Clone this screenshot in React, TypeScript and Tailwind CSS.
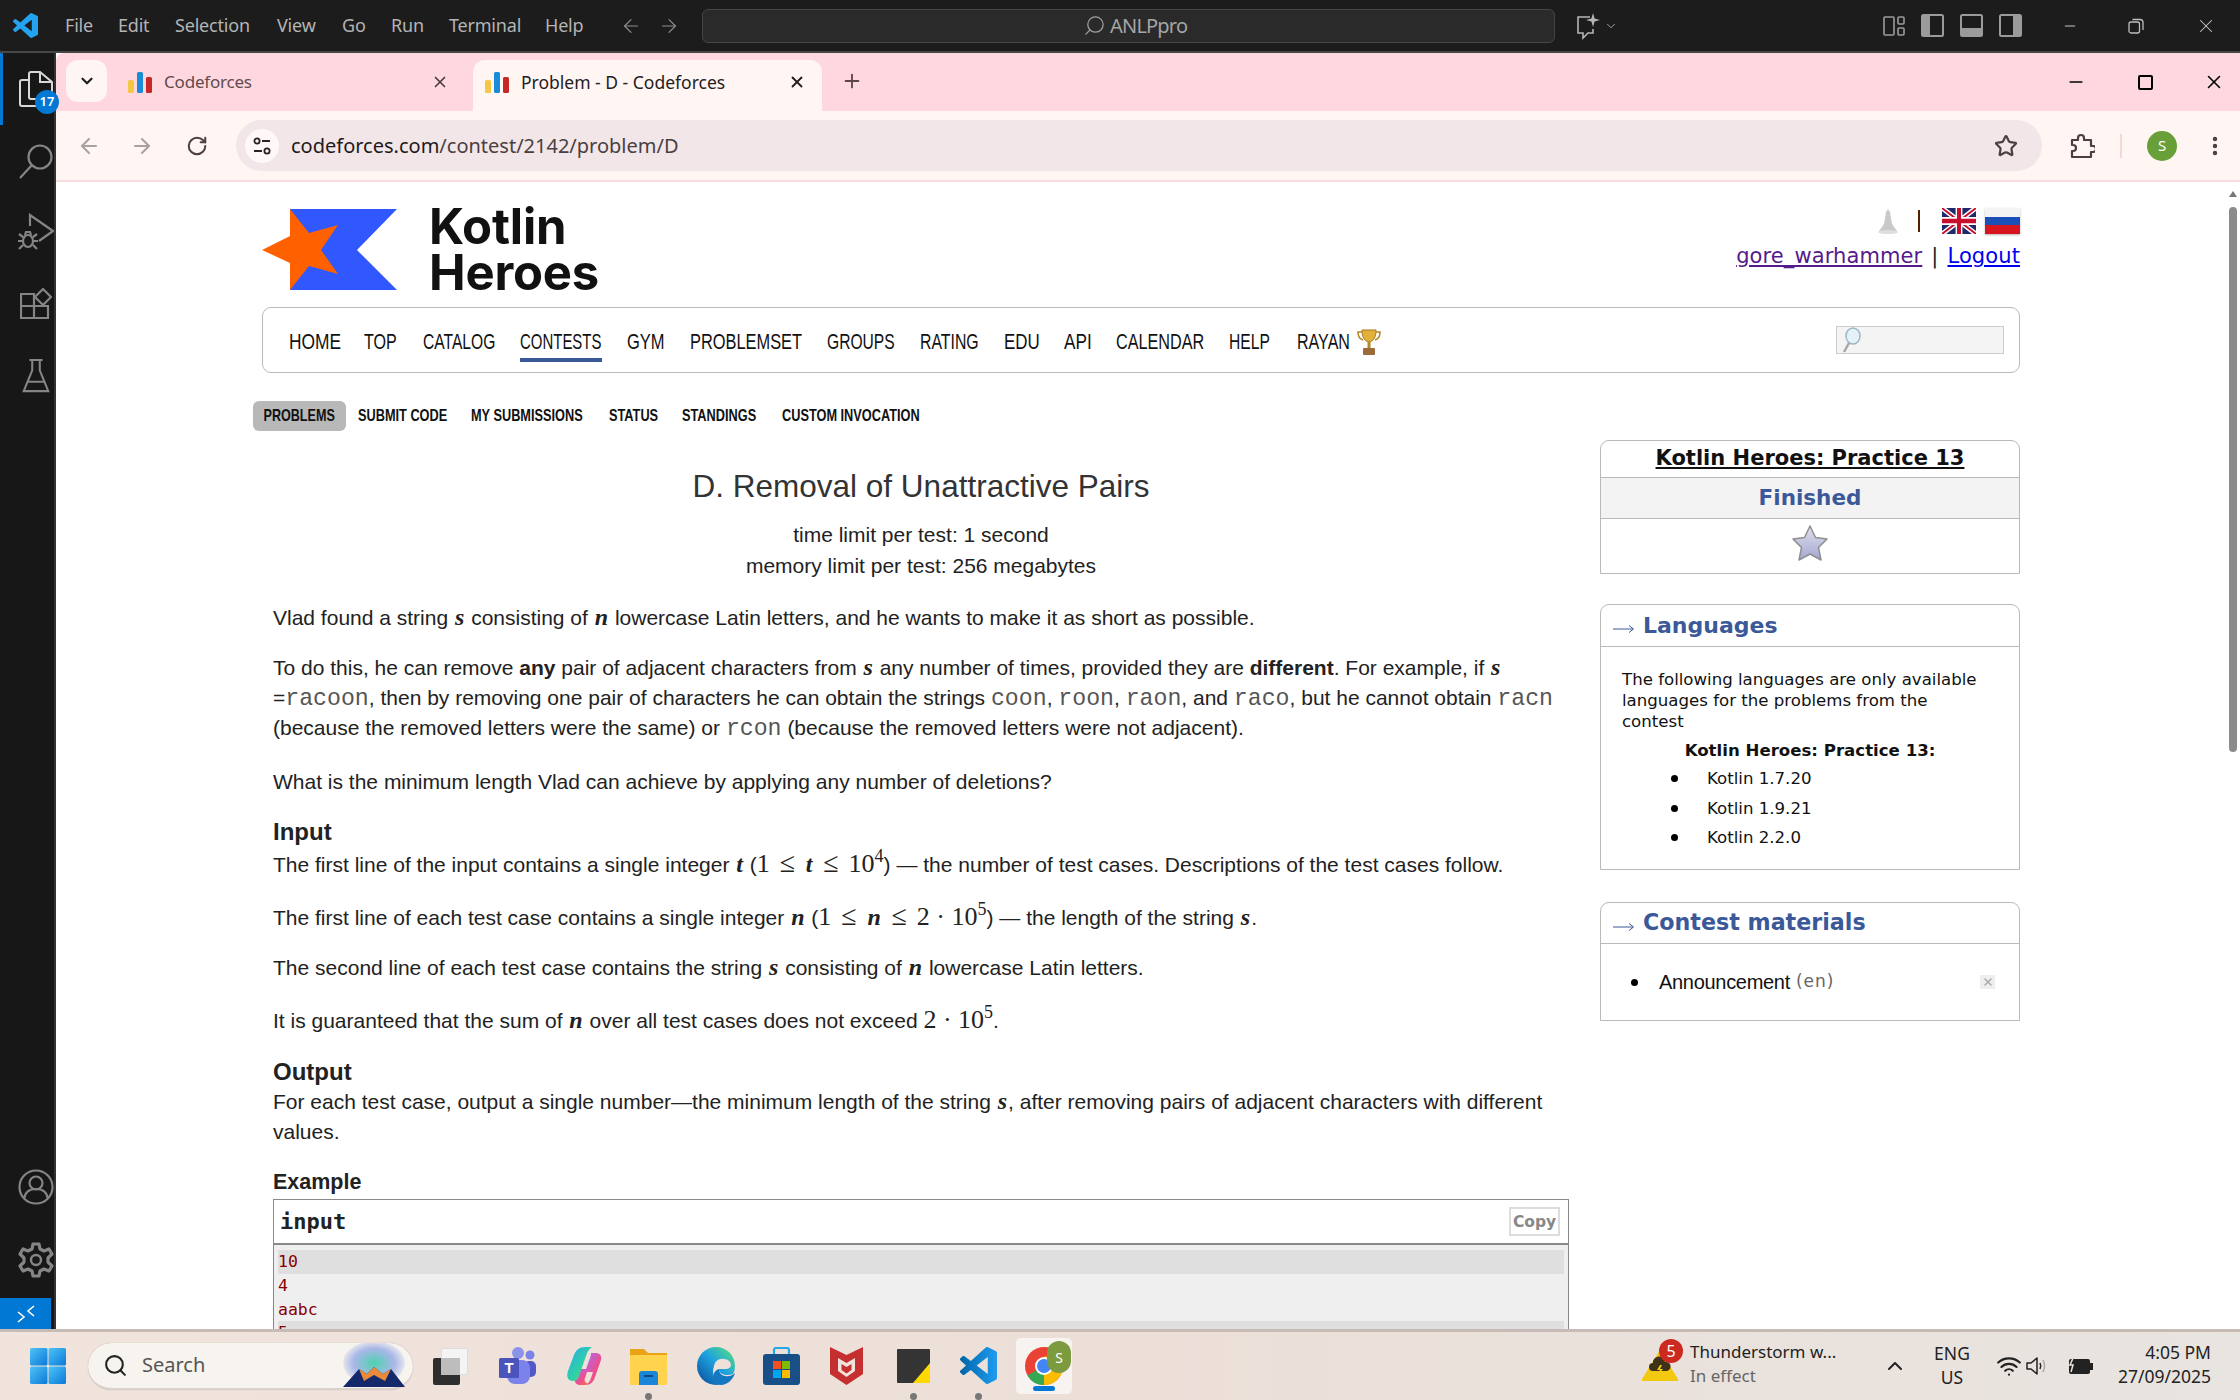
import React from "react";
import { ArrowLeft, ArrowRight, RotateCw, Star, EllipsisVertical, Plus, X, Minus, ChevronDown, ChevronUp, Search, Wifi } from "lucide-react";

const Favicon = ({ className = "" }: { className?: string }) => (
  <svg width="24" height="24" viewBox="0 0 24 24" className={className}>
    <rect x="0" y="10" width="6" height="13" rx="1.5" fill="#f6c744" />
    <rect x="9" y="2" width="6" height="21" rx="1.5" fill="#1a8cd8" />
    <rect x="18" y="7" width="6" height="16" rx="1.5" fill="#c62828" />
  </svg>
);

const VsLogo = ({ size = 24, gradient = false, id = "vs" }: { size?: number; gradient?: boolean; id?: string }) => (
  <svg width={size} height={size} viewBox="0 0 24 24">
    <defs>
      <linearGradient id={id} x1="0" x2="1" y1="0" y2="0">
        <stop offset="0" stopColor="#0065a9" />
        <stop offset="1" stopColor="#1f9cf0" />
      </linearGradient>
    </defs>
    <path
      fill={gradient ? `url(#${id})` : "#23a3ef"}
      d="M23.15 2.587L18.21.21a1.494 1.494 0 0 0-1.705.29l-9.46 8.63-4.12-3.128a.999.999 0 0 0-1.276.057L.327 7.261A1 1 0 0 0 .326 8.74L3.899 12 .326 15.26a1 1 0 0 0 .001 1.479L1.65 17.94a.999.999 0 0 0 1.276.057l4.12-3.128 9.46 8.63a1.492 1.492 0 0 0 1.704.29l4.942-2.377A1.5 1.5 0 0 0 24 20.06V3.939a1.5 1.5 0 0 0-.85-1.352zm-5.146 14.861L10.826 12l7.178-5.448v10.896z"
    />
  </svg>
);

function TitleBar() {
  const items = [
    ["File", "w-[29px]"],
    ["Edit", "w-[33px]"],
    ["Selection", "w-[78px]"],
    ["View", "w-[41px]"],
    ["Go", "w-[25px]"],
    ["Run", "w-[34px]"],
    ["Terminal", "w-[72px]"],
    ["Help", "w-[41px]"],
  ];
  return (
    <div className="h-[53px] shrink-0 bg-[#1c1c1c] flex items-center border-b-2 border-[#474747] font-['Noto_Sans','Open_Sans',sans-serif]">
      <div className="ml-[13px] w-[52px]">
        <VsLogo size={25} id="vs-title" />
      </div>
      <div className="flex gap-[24px] text-[18px] text-[#b4b4b4] tracking-[-0.2px]">
        {items.map(([t, w]) => (
          <span key={t} className={`${w} whitespace-nowrap`}>
            {t}
          </span>
        ))}
      </div>
      <div className="flex gap-[16px] ml-[34px] text-[#8d8d8d]">
        <ArrowLeft size={22} strokeWidth={1.3} />
        <ArrowRight size={22} strokeWidth={1.3} />
      </div>
      <div className="ml-[22px] w-[853px] h-[34px] rounded-[6px] bg-[#2a2a2a] border border-[#454545] flex items-center pl-[380px]">
        <Search size={23} strokeWidth={1.3} className="text-[#a0a0a0] -scale-x-100" />
        <span className="ml-[4px] text-[20px] text-[#a5a5a5] tracking-[-0.8px]">ANLPpro</span>
      </div>
      <div className="ml-[21px] flex items-center text-[#b5b5b5]">
        <svg width="26" height="28" viewBox="0 0 26 28" fill="none" stroke="currentColor" strokeWidth="1.6">
          <path d="M14 5H2v16h5v5l5-5h5v-4" />
          <path d="M17 1l1.6 5.4L24 8l-5.4 1.6L17 15l-1.6-5.4L10 8l5.4-1.6z" fill="currentColor" stroke="none" />
        </svg>
        <ChevronDown size={14} strokeWidth={1.5} className="ml-[2px]" />
      </div>
      <div className="ml-auto flex items-center text-[#9b9b9b]">
        <svg width="22" height="22" viewBox="0 0 22 22" fill="none" stroke="currentColor" strokeWidth="1.6" className="mr-[16px]">
          <rect x="1" y="2" width="10" height="18" rx="1" />
          <rect x="15" y="2" width="6" height="7" rx="1" />
          <rect x="15" y="13" width="6" height="7" rx="1" />
        </svg>
        <svg width="23" height="23" viewBox="0 0 23 23" className="mr-[16px]">
          <rect x="1" y="1" width="21" height="21" rx="1.5" fill="none" stroke="currentColor" strokeWidth="2" />
          <rect x="1" y="1" width="8" height="21" fill="currentColor" />
        </svg>
        <svg width="23" height="23" viewBox="0 0 23 23" className="mr-[16px]">
          <rect x="1" y="1" width="21" height="21" rx="1.5" fill="none" stroke="currentColor" strokeWidth="2" />
          <rect x="1" y="14" width="21" height="8" fill="currentColor" />
        </svg>
        <svg width="23" height="23" viewBox="0 0 23 23" className="mr-[40px]">
          <rect x="1" y="1" width="21" height="21" rx="1.5" fill="none" stroke="currentColor" strokeWidth="2" />
          <rect x="14" y="1" width="8" height="21" fill="currentColor" />
        </svg>
        <Minus size={16} strokeWidth={1.6} className="mr-[50px] text-[#c4c4c4]" />
        <svg width="16" height="16" viewBox="0 0 16 16" fill="none" stroke="#bdbdbd" strokeWidth="1.3" className="mr-[51px]">
          <rect x="1" y="4" width="10.5" height="11" rx="2" />
          <path d="M4.5 1.5H12a3 3 0 0 1 3 3V12" />
        </svg>
        <X size={22} strokeWidth={1.1} className="mr-[23px] text-[#c8c8c8]" />
      </div>
    </div>
  );
}

function ActivityBar() {
  const s = "#858585";
  return (
    <div className="w-[56px] shrink-0 bg-[#171717] border-r-2 border-[#333] flex flex-col relative">
      <div className="h-[72px] flex items-center justify-center relative border-l-[3px] border-[#0078d4]">
        <svg width="34" height="38" viewBox="0 0 34 38" fill="none" stroke="#d8d8d8" strokeWidth="2" className="ml-[14px]">
          <path d="M10 10H3a2 2 0 0 0-2 2v22a2 2 0 0 0 2 2h16a2 2 0 0 0 2-2v-5" />
          <path d="M21 2H12a2 2 0 0 0-2 2v23a2 2 0 0 0 2 2h19a2 2 0 0 0 2-2V12z" />
          <path d="M21 2v10h12" />
        </svg>
        <span className="absolute left-[32px] top-[37px] w-[24px] h-[24px] rounded-full bg-[#0078d4] text-white text-[13px] font-semibold flex items-center justify-center font-['Noto_Sans',sans-serif] z-10">
          17
        </span>
      </div>
      <div className="flex flex-col items-center pt-[18px] pl-[18px]">
        <svg width="36" height="36" viewBox="0 0 36 36" fill="none" stroke={s} strokeWidth="2.2">
          <circle cx="22" cy="14" r="11.5" />
          <path d="M14 22L2 35" />
        </svg>
        <svg width="36" height="38" viewBox="0 0 36 38" fill="none" stroke={s} strokeWidth="2.2" className="mt-[34px]">
          <path d="M12 13V2l23 16-14 10" />
          <ellipse cx="10" cy="28" rx="5" ry="6" />
          <path d="M1 21l4 3M19 21l-4 3M0 28h5M15 28h5M1 36l4-4M19 36l-4-4M7 22l1-3h4l1 3" />
        </svg>
        <svg width="32" height="32" viewBox="0 0 32 32" fill="none" stroke={s} strokeWidth="2.2" className="mt-[37px]">
          <path d="M1 6h13v24H1zM1 18h27v12H14" />
          <path d="M23 1l8 8-8 8-8-8z" />
        </svg>
        <svg width="28" height="34" viewBox="0 0 28 36" fill="none" stroke={s} strokeWidth="2.2" className="mt-[39px]">
          <path d="M7 1h14M10 1v11L1 34h26l-9-22V1M6 24h16" />
        </svg>
      </div>
      <div className="mt-auto flex flex-col items-center">
        <svg width="36" height="36" viewBox="0 0 36 36" fill="none" stroke={s} strokeWidth="2.2" className="ml-[18px]">
          <circle cx="18" cy="18" r="16.5" />
          <circle cx="18" cy="14" r="6.5" />
          <path d="M6 30c1-7 6-10 12-10s11 3 12 10" />
        </svg>
        <svg width="36" height="36" viewBox="0 0 36 36" fill="none" stroke={s} strokeWidth="3.2" className="mt-[37px] ml-[18px]">
          <circle cx="18" cy="18" r="5" strokeWidth="2.4" />
          <path d="M15 2h6l1 5 4 2 5-2 3 5-4 4v4l4 4-3 5-5-2-4 2-1 5h-6l-1-5-4-2-5 2-3-5 4-4v-4L2 12l3-5 5 2 4-2z" strokeLinejoin="round" />
        </svg>
        <div className="mt-[20px] w-full h-[31px] pr-[3px]">
          <div className="h-full bg-[#0078d4] flex items-center justify-center">
            <svg width="20" height="18" viewBox="0 0 20 18" fill="none" stroke="#fff" strokeWidth="1.6">
              <path d="M2 7l6 5-6 5M18 1l-6 5 6 5" />
            </svg>
          </div>
        </div>
      </div>
    </div>
  );
}

function ChromeBars() {
  return (
    <>
      <div className="h-[58px] shrink-0 bg-[#ffd8df] flex font-['Noto_Sans',sans-serif]">
        <div className="ml-[10px] mt-[7px] w-[41px] h-[42px] rounded-[12px] bg-[#fff5f3] flex items-center justify-center">
          <ChevronDown size={18} strokeWidth={3} className="text-[#222]" />
        </div>
        <div className="w-[366px] flex items-center pl-[21px] text-[#5f4a4e]">
          <Favicon />
          <span className="ml-[12px] text-[17px] tracking-[-0.2px]">Codeforces</span>
          <X size={18} strokeWidth={2.2} className="ml-auto mr-[24px] text-[#4d3a3e]" />
        </div>
        <div className="mt-[7px] w-[349px] h-[51px] bg-[#fff5f3] rounded-t-[12px] flex items-center pl-[12px] pb-[7px] text-[#241c1d]">
          <Favicon />
          <span className="ml-[12px] text-[17.500px]">Problem - D - Codeforces</span>
          <X size={18} strokeWidth={2.4} className="ml-auto mr-[16px]" />
        </div>
        <div className="ml-[19px] flex items-center pb-[2px]">
          <Plus size={22} strokeWidth={2} className="text-[#5a4549]" />
        </div>
        <div className="ml-auto flex items-center text-black pr-[15px]">
          <Minus size={20} strokeWidth={2} className="mr-[52px]" />
          <div className="w-[15px] h-[15px] border-2 border-black rounded-[2px] mr-[50px]" />
          <X size={22} strokeWidth={1.7} />
        </div>
      </div>
      <div className="h-[71px] shrink-0 bg-[#fff5f3] border-b-2 border-[#f9dce0] flex items-center">
        <ArrowLeft size={24} strokeWidth={2} className="ml-[21px] text-[#a8a1a2]" />
        <ArrowRight size={24} strokeWidth={2} className="ml-[29px] text-[#a8a1a2]" />
        <RotateCw size={22} strokeWidth={2.2} className="ml-[32px] text-[#4f3e41]" />
        <div className="ml-[28px] w-[1806px] h-[51px] rounded-full bg-[#f2e6e9] flex items-center pl-[9px]">
          <div className="w-[34px] h-[34px] rounded-full bg-[#fff8f7] flex items-center justify-center">
            <svg width="20" height="20" viewBox="0 0 20 20" fill="none" stroke="#2b2226" strokeWidth="1.8">
              <circle cx="5" cy="5" r="2.6" />
              <path d="M10 5h8M2 15h8" />
              <circle cx="15" cy="15" r="2.6" />
            </svg>
          </div>
          <span className="ml-[12px] text-[20px] text-[#1f1a1b] font-['Noto_Sans',sans-serif]">
            codeforces.com<span className="text-[#4a3f42]">/contest/2142/problem/D</span>
          </span>
          <Star size={24} strokeWidth={2.2} className="ml-auto mr-[24px] text-[#4f3e41]" />
        </div>
        <svg width="26" height="26" viewBox="0 0 26 26" fill="none" stroke="#4f3e41" strokeWidth="2.2" className="ml-[27px]">
          <path d="M3 7h6V5a3 3 0 0 1 6 0v2h7v6h2a3 3 0 0 1 0 6h-2v5H3v-6h1a3 3 0 0 0 0-6H3z" strokeLinejoin="round" />
        </svg>
        <div className="ml-[25px] w-[2px] h-[24px] bg-[#f9d5da]" />
        <div className="ml-[25px] w-[30px] h-[30px] rounded-full bg-[#689f38] text-white text-[15px] flex items-center justify-center font-['Noto_Sans',sans-serif]">
          S
        </div>
        <EllipsisVertical size={24} strokeWidth={2.4} className="ml-[26px] text-[#4f3e41]" />
      </div>
    </>
  );
}

const V = ({ children }: { children: React.ReactNode }) => (
  <span className="font-['Liberation_Serif',serif] italic font-bold text-[24px] leading-none text-[#222] mx-[1px]">{children}</span>
);
const N = ({ children }: { children: React.ReactNode }) => (
  <span className="font-['Liberation_Serif',serif] text-[26px] leading-none text-[#222]">{children}</span>
);
const Le = () => <span className="font-['Liberation_Serif',serif] text-[28px] leading-none text-[#222] mx-[4px]">≤</span>;
const Sup = ({ children }: { children: React.ReactNode }) => (
  <sup className="font-['Liberation_Serif',serif] text-[18px] text-[#222] -top-[10px]">{children}</sup>
);
const Tt = ({ children }: { children: React.ReactNode }) => (
  <span className="font-['Liberation_Mono',monospace] text-[23.200px] leading-none text-[#555]">{children}</span>
);

function Header() {
  const nav = [
    ["HOME", "w-[50px]", "scale-x-[.79]"],
    ["TOP", "w-[34px]", "scale-x-[.73]"],
    ["CATALOG", "w-[72px]", "scale-x-[.71]"],
    ["CONTESTS", "w-[82px]", "scale-x-[.68]"],
    ["GYM", "w-[38px]", "scale-x-[.75]"],
    ["PROBLEMSET", "w-[112px]", "scale-x-[.745]"],
    ["GROUPS", "w-[68px]", "scale-x-[.71]"],
    ["RATING", "w-[59px]", "scale-x-[.72]"],
    ["EDU", "w-[35px]", "scale-x-[.77]"],
    ["API", "w-[27px]", "scale-x-[.78]"],
    ["CALENDAR", "w-[88px]", "scale-x-[.737]"],
    ["HELP", "w-[43px]", "scale-x-[.71]"],
    ["RAYAN", "w-[53px]", "scale-x-[.73]"],
  ];
  const sub = [
    ["SUBMIT CODE", "w-[89px]"],
    ["MY SUBMISSIONS", "w-[114px]"],
    ["STATUS", "w-[49px]"],
    ["STANDINGS", "w-[76px]"],
    ["CUSTOM INVOCATION", "w-[140px]"],
  ];
  const cond = "font-['Liberation_Sans',sans-serif]";
  return (
    <>
      <div className="flex items-start h-[98px]">
        <svg width="135" height="81" viewBox="0 0 135 81" className="shrink-0">
          <polygon points="28,0 135,0 95,41 135,81 28,81" fill="#3157ff" />
          <polygon points="0,41 28,27 28,0 47,24 76,16 59,41 76,65 47,57 28,81 28,54" fill="#ff6000" />
        </svg>
        <div className="ml-[32px] -mt-[5px] font-['Inter',sans-serif] font-bold text-[49px] leading-[46px] text-[#111] tracking-[-0.2px]">
          Kotlin
          <br />
          Heroes
        </div>
        <div className="ml-auto flex flex-col items-end -mt-[2px]">
          <div className="flex items-center h-[28px]">
            <svg width="22" height="25" viewBox="0 0 22 25">
              <path d="M11 0l2 3 2 12 5 7H2l5-7 2-12z" fill="#c9c9c9" />
              <ellipse cx="11" cy="23" rx="10" ry="2" fill="#dedede" />
            </svg>
            <div className="ml-[19px] w-[2px] h-[22px] bg-[#5a1f00]" />
            <svg width="34" height="26" viewBox="0 0 60 40" className="ml-[22px]" preserveAspectRatio="none">
              <rect width="60" height="40" fill="#1f2a6b" />
              <path d="M0 0L60 40M60 0L0 40" stroke="#fff" strokeWidth="8" />
              <path d="M0 0L60 40M60 0L0 40" stroke="#c8102e" strokeWidth="3" />
              <path d="M30 0V40M0 20H60" stroke="#fff" strokeWidth="12" />
              <path d="M30 0V40M0 20H60" stroke="#c8102e" strokeWidth="7" />
            </svg>
            <div className="ml-[9px] w-[35px] h-[26px] flex flex-col shadow-[0_1px_2px_rgba(0,0,0,0.3)]">
              <div className="flex-1 bg-[#f4f4f4]" />
              <div className="flex-1 bg-[#1b4fb8]" />
              <div className="flex-1 bg-[#d8141f]" />
            </div>
          </div>
          <div className="mt-[8px] text-[21px] font-['DejaVu_Sans',sans-serif] leading-[26px] text-[#222] whitespace-nowrap tracking-[0.1px]">
            <span className="underline text-[#551a8b]">gore_warhammer</span>
            <span className="mx-[9px]">|</span>
            <span className="underline text-[#0000ee]">Logout</span>
          </div>
        </div>
      </div>
      <div className="h-[66px] border border-[#b9b9b9] rounded-[9px] flex items-center relative">
        <div className={`pl-[26px] flex items-center gap-[25px] text-[22px] text-[#111] ${cond} h-full`}>
          {nav.map(([n, w, sc]) => (
            <div key={n} className={`${w} shrink-0 relative h-full flex items-center pt-[3px] ${n === "CONTESTS" ? "after:absolute after:left-0 after:right-0 after:top-[50px] after:h-[4px] after:bg-[#3b5998]" : ""}`}>
              <span className={`inline-block origin-left whitespace-nowrap ${sc}`}>{n}</span>
            </div>
          ))}
        </div>
        <svg width="24" height="30" viewBox="0 0 24 30" fill="none" className="ml-[7px] mt-[4px]">
          <path d="M5 3h14c0 7-2 11-7 12C7 14 5 10 5 3z" fill="#e2b13c" stroke="#a9781c" />
          <path d="M5 5H1c0 5 2 7 5 8M19 5h4c0 5-2 7-5 8" stroke="#b48822" strokeWidth="1.6" />
          <rect x="10.5" y="15" width="3" height="6" fill="#b48822" />
          <rect x="6" y="21" width="12" height="7" rx="1" fill="#9c6b3a" />
        </svg>
        <div className="ml-auto mr-[15px] w-[168px] h-[28px] bg-[#f4f4f4] border border-[#ccc] flex items-center">
          <svg width="22" height="26" viewBox="0 0 22 26" fill="none" className="ml-[3px]">
            <ellipse cx="13" cy="9" rx="7" ry="8" fill="#e4f1f7" stroke="#9db7c4" strokeWidth="1.5" />
            <path d="M9 16L4 25" stroke="#a8a8a8" strokeWidth="2.5" />
          </svg>
        </div>
      </div>
      <div className={`flex items-center mt-[28px] -ml-[9px] h-[30px] text-[17px] font-bold text-[#111] ${cond}`}>
        <div className="w-[93px] h-full rounded-[6px] bg-[#b8b8b8] flex items-center justify-center">
          <span className="inline-block whitespace-nowrap scale-x-[.74]">PROBLEMS</span>
        </div>
        <div className="flex gap-[24px] ml-[12px]">
          {sub.map(([t, w]) => (
            <span key={t} className={`${w} shrink-0`}>
              <span className="inline-block origin-left whitespace-nowrap scale-x-[.75]">{t}</span>
            </span>
          ))}
        </div>
      </div>
    </>
  );
}

function Problem() {
  const sans = "font-['Liberation_Sans',Arial,sans-serif]";
  return (
    <div className={`w-[1296px] ml-[11px] pt-[36px] shrink-0 text-[#222] text-[21px] leading-[30px] ${sans}`}>
      <div className="text-center text-[31.500px] leading-[38px] text-[#333]">D. Removal of Unattractive Pairs</div>
      <div className="text-center mt-[15px]">time limit per test: 1 second</div>
      <div className="text-center mt-[1px]">memory limit per test: 256 megabytes</div>
      <p className="mt-[22px]">
        Vlad found a string <V>s</V> consisting of <V>n</V> lowercase Latin letters, and he wants to make it as short as possible.
      </p>
      <p className="mt-[20px]">
        To do this, he can remove <b>any</b> pair of adjacent characters from <V>s</V> any number of times, provided they are <b>different</b>. For example, if <V>s</V> =<Tt>racoon</Tt>, then by removing one pair of characters he can obtain the strings <Tt>coon</Tt>, <Tt>roon</Tt>, <Tt>raon</Tt>, and <Tt>raco</Tt>, but he cannot obtain <Tt>racn</Tt> (because the removed letters were the same) or <Tt>rcon</Tt> (because the removed letters were not adjacent).
      </p>
      <p className="mt-[24px]">What is the minimum length Vlad can achieve by applying any number of deletions?</p>
      <div className="mt-[20px] font-bold text-[24px] leading-[30px]">Input</div>
      <p className="mt-[2px]">
        The first line of the input contains a single integer <V>t</V> (<N>1</N> <Le /> <V>t</V> <Le /> <N>10</N>
        <Sup>4</Sup>) — the number of test cases. Descriptions of the test cases follow.
      </p>
      <p className="mt-[22px]">
        The first line of each test case contains a single integer <V>n</V> (<N>1</N> <Le /> <V>n</V> <Le /> <N>2 · 10</N>
        <Sup>5</Sup>) — the length of the string <V>s</V>.
      </p>
      <p className="mt-[20px]">
        The second line of each test case contains the string <V>s</V> consisting of <V>n</V> lowercase Latin letters.
      </p>
      <p className="mt-[23px]">
        It is guaranteed that the sum of <V>n</V> over all test cases does not exceed <N>2 · 10</N>
        <Sup>5</Sup>.
      </p>
      <div className="mt-[21px] font-bold text-[24px] leading-[30px]">Output</div>
      <p className="mt-[0px]">
        For each test case, output a single number—the minimum length of the string <V>s</V>, after removing pairs of adjacent characters with different values.
      </p>
      <div className="mt-[20px] font-bold leading-[30px] text-[21.5px]">Example</div>
      <div className="mt-[2px] border border-[#888]">
        <div className="h-[45px] flex items-center border-b-2 border-[#888] pl-[6px] pr-[8px]">
          <span className="font-['DejaVu_Sans_Mono',monospace] font-bold text-[22px] text-[#222]">input</span>
          <span className="ml-auto w-[51px] h-[29px] border-2 border-[#ddd] flex items-center justify-center text-[15.500px] font-bold text-[#888] font-['DejaVu_Sans',sans-serif]">Copy</span>
        </div>
        <div className="bg-[#efefef] px-[4px] pt-[5px] h-[200px] font-['DejaVu_Sans_Mono',monospace] text-[16.5px] leading-[23.5px] text-[#800]">
          <div className="bg-[#dfdfdf] h-[24px]">10</div>
          <div>4</div>
          <div>aabc</div>
          <div className="bg-[#dfdfdf]">5</div>
        </div>
      </div>
    </div>
  );
}

const Arrow = () => (
  <svg width="21" height="10" viewBox="0 0 21 10" fill="none" stroke="#3b5998" strokeWidth="1" className="mr-[9px] mt-[7px] shrink-0">
    <path d="M0 5h20M16 1.500L20.500 5 16 8.500" />
  </svg>
);

function Sidebar() {
  const dv = "font-['DejaVu_Sans',sans-serif]";
  const head = `flex items-center border-b border-[#b9b9b9] pl-[12px] font-bold text-[#3b5998] ${dv}`;
  const langs = ["Kotlin 1.7.20", "Kotlin 1.9.21", "Kotlin 2.2.0"];
  return (
    <div className="w-[420px] ml-auto flex flex-col text-[#111]">
      <div className={`mt-[9px] h-[134px] border border-[#b9b9b9] rounded-t-[9px] ${dv} flex flex-col`}>
        <div className="h-[37px] flex items-center justify-center border-b border-[#b9b9b9] font-bold text-[21px] underline">Kotlin Heroes: Practice 13</div>
        <div className="h-[41px] flex items-center justify-center border-b border-[#b9b9b9] bg-[#f3f3f3] font-bold text-[21.5px] text-[#3b5998]">Finished</div>
        <div className="flex-1 flex items-center justify-center pb-[7px]">
          <svg width="38" height="38" viewBox="0 0 38 38">
            <defs>
              <linearGradient id="st" x1="0" x2="0" y1="0" y2="1">
                <stop offset="0" stopColor="#dfe0ea" />
                <stop offset="1" stopColor="#a5a6d4" />
              </linearGradient>
            </defs>
            <path d="M19 2l5.5 11.5L36 15l-8.5 8.500L30 36l-11-6-11 6 2.5-12.500L2 15l11.500-1.500z" fill="url(#st)" stroke="#8e8e8e" strokeWidth="1.5" strokeLinejoin="round" />
          </svg>
        </div>
      </div>
      <div className="mt-[30px] h-[266px] border border-[#b9b9b9] rounded-t-[9px]">
        <div className={`h-[42px] text-[22px] ${head}`}>
          <Arrow />
          Languages
        </div>
        <div className={`pl-[21px] pr-[30px] pt-[22px] text-[16.6px] leading-[21px] ${dv}`}>
          <div>The following languages are only available languages for the problems from the contest</div>
          <div className="text-center font-bold mt-[8px] -mr-[9px]">Kotlin Heroes: Practice 13:</div>
          <div className="mt-[3px] pl-[49px] flex flex-col">
            {langs.map((l) => (
              <div key={l} className="h-[29.500px] flex items-center">
                <span className="w-[7px] h-[7px] rounded-full bg-black shrink-0" />
                <span className="ml-[29px]">{l}</span>
              </div>
            ))}
          </div>
        </div>
      </div>
      <div className="mt-[32px] h-[119px] border border-[#b9b9b9] rounded-t-[9px]">
        <div className={`h-[41px] text-[22.200px] ${head}`}>
          <Arrow />
          Contest materials
        </div>
        <div className="flex items-center pl-[30px] pr-[24px] h-[76px]">
          <span className="w-[7px] h-[7px] rounded-full bg-black" />
          <span className="ml-[21px] text-[20px] font-['Liberation_Sans',sans-serif] tracking-[-0.3px]">Announcement</span>
          <span className={`ml-[6px] text-[17px] text-[#666] ${dv} tracking-[1px]`}>(en)</span>
          <span className="ml-auto w-[15px] h-[14px] bg-[#eee] flex items-center justify-center">
            <X size={12} strokeWidth={3} className="text-[#aaa]" />
          </span>
        </div>
      </div>
    </div>
  );
}

const TaskIcons = () => (
  <div className="flex items-center">
    {/* task view */}
    <div className="ml-[20px] w-[37px] h-[37px] relative">
      <div className="absolute left-[8px] top-0 w-[27px] h-[27px] bg-[#f4f4f4] rounded-[2px] border border-[#ddd]" />
      <div className="absolute left-0 top-[10px] w-[27px] h-[27px] bg-[#2e2e2e] rounded-[2px]" />
      <div className="absolute left-[8px] top-[10px] w-[19px] h-[17px] bg-[#bdbdbd]" />
    </div>
    {/* teams */}
    <svg width="37" height="38" viewBox="0 0 37 38" className="ml-[29px]">
      <circle cx="31" cy="8" r="4.5" fill="#7b83eb" />
      <rect x="25" y="14" width="12" height="16" rx="5" fill="#5059c9" />
      <circle cx="19" cy="6" r="6" fill="#8b93e8" />
      <rect x="8" y="13" width="23" height="24" rx="8" fill="#7b83eb" />
      <rect x="0" y="11" width="20" height="20" rx="1.5" fill="#4b53bc" />
      <text x="10" y="26" textAnchor="middle" fontSize="15" fontWeight="700" fill="#fff" fontFamily="Liberation Sans">T</text>
    </svg>
    {/* copilot */}
    <svg width="38" height="38" viewBox="0 0 38 38" className="ml-[29px]">
      <defs>
        <linearGradient id="cp1" x1="0" x2="1" y1="0" y2="1">
          <stop offset="0" stopColor="#2aa6f0" />
          <stop offset="0.6" stopColor="#2fd4a0" />
          <stop offset="1" stopColor="#f6c52b" />
        </linearGradient>
        <linearGradient id="cp2" x1="0" x2="1" y1="0" y2="1">
          <stop offset="0" stopColor="#a371f7" />
          <stop offset="0.6" stopColor="#ee4d8e" />
          <stop offset="1" stopColor="#f6752b" />
        </linearGradient>
      </defs>
      <path d="M21 38h-6c-4 0-6-3-5-7l3-9h10l-3 9c-1 3 0 5 3 5z" fill="url(#cp2)" />
      <path d="M23 0h-3c-6 0-9 3-11 8L3 24c-2 6 0 10 5 10 3 0 5-2 6-5l7-20c1-4 3-7 6-9z" fill="url(#cp1)" />
      <path d="M26 6h5c4 0 6 3 5 7l-6 17c-1 4-4 8-9 8 2-1 4-4 5-7l2-6-8 0 6-17z" fill="url(#cp2)" />
    </svg>
    {/* explorer */}
    <div className="relative ml-[27px] w-[37px] h-[38px]">
      <svg width="37" height="38" viewBox="0 0 37 38">
        <path d="M0 2h14l4 4h19v6H0z" fill="#e8a317" />
        <rect x="0" y="8" width="37" height="30" rx="1" fill="#ffd34e" />
        <path d="M9 38V27a3 3 0 0 1 3-3h13a3 3 0 0 1 3 3v11z" fill="#1a86d9" />
        <rect x="14" y="28" width="9" height="2" fill="#0c4a86" />
      </svg>
      <div className="absolute left-[15px] top-[46px] w-[7px] h-[7px] rounded-full bg-[#777]" />
    </div>
    {/* edge */}
    <svg width="38" height="38" viewBox="0 0 38 38" className="ml-[30px]">
      <defs>
        <linearGradient id="ed" x1="0.9" x2="0.1" y1="0.1" y2="0.9">
          <stop offset="0" stopColor="#4dd68a" />
          <stop offset="0.45" stopColor="#1fa3e0" />
          <stop offset="1" stopColor="#0c59a4" />
        </linearGradient>
      </defs>
      <circle cx="19" cy="19" r="19" fill="url(#ed)" />
      <path d="M17 19c1-5 5-8 10-7 4 0 7 3 7 6 0 2-2 4-6 4h-6c0 4 4 6 9 6 3 0 5-1 7-2l-2 6c-3 3-6 4-9 4-9 0-13-8-10-17z" fill="#eee1da" />
      <path d="M22 22c0 5 4 8 10 7 2 0 4-1 6-3-2 7-8 12-14 12-5 0-8-3-8-8 0-3 2-7 6-8z" fill="#1377c2" />
    </svg>
    {/* store */}
    <svg width="37" height="38" viewBox="0 0 37 38" className="ml-[28px]">
      <path d="M11 8V3a2 2 0 0 1 2-2h11a2 2 0 0 1 2 2v5" fill="none" stroke="#25a8e8" strokeWidth="2.200" />
      <rect x="0" y="7" width="37" height="31" rx="3" fill="#174f86" />
      <rect x="10" y="14" width="8" height="8" fill="#f25022" />
      <rect x="19" y="14" width="8" height="8" fill="#7fba00" />
      <rect x="10" y="23" width="8" height="8" fill="#00a4ef" />
      <rect x="19" y="23" width="8" height="8" fill="#ffb900" />
    </svg>
    {/* mcafee */}
    <svg width="33" height="38" viewBox="0 0 33 38" className="ml-[30px]">
      <path d="M0 0l16.500 8L33 0v27L16.500 38 0 27z" fill="#c62f2f" />
      <path d="M8 11l8.500 5 8.500-5v13l-8.500 6L8 24z" fill="#efe3dc" />
      <path d="M11.500 17l5 3 5-3v6l-5 3.500-5-3.500z" fill="#c62f2f" />
    </svg>
    {/* sticky */}
    <div className="relative ml-[34px] w-[33px] h-[38px]">
      <svg width="33" height="38" viewBox="0 0 33 38">
        <rect y="2" width="33" height="34" rx="1" fill="#343434" />
        <path d="M16 36l17-20v20z" fill="#ffd800" />
      </svg>
      <div className="absolute left-[13px] top-[46px] w-[7px] h-[7px] rounded-full bg-[#777]" />
    </div>
    {/* vscode */}
    <div className="relative ml-[30px] w-[37px] h-[38px]">
      <VsLogo size={37} gradient id="vs-task" />
      <div className="absolute left-[15px] top-[46px] w-[7px] h-[7px] rounded-full bg-[#777]" />
    </div>
    {/* chrome */}
    <div className="relative ml-[19px] w-[56px] h-[56px] rounded-[5px] bg-[#f7f3f0] flex items-center justify-center">
      <svg width="38" height="38" viewBox="0 0 38 38">
        <circle cx="19" cy="19" r="19" fill="#ea4335" />
        <path d="M19 19L2.500 28.500A19 19 0 0 0 19 38z" fill="#34a853" />
        <path d="M19 19v19A19 19 0 0 0 35.500 9.500L19 9.500z" fill="#fbbc04" />
        <circle cx="19" cy="19" r="9" fill="#fff" />
        <circle cx="19" cy="19" r="7" fill="#4285f4" />
      </svg>
      <div className="absolute right-[1px] top-[3px] w-[24px] h-[32px] rounded-full bg-[#7c9a3e] text-white text-[14px] flex items-center justify-center font-['Noto_Sans',sans-serif]">S</div>
      <div className="absolute left-[17px] bottom-[3px] w-[22px] h-[5px] rounded-full bg-[#0078d4]" />
    </div>
  </div>
);

function Taskbar() {
  const f = "font-['Noto_Sans','Open_Sans',sans-serif]";
  return (
    <div className={`h-[71px] shrink-0 border-t-[3px] border-[#c6bcb5] bg-gradient-to-r from-[#f0e4dc] via-[#ecdfd8] to-[#e8e4e0] flex items-center ${f}`}>
      <svg width="36" height="36" viewBox="0 0 36 36" className="ml-[30px]">
        <defs>
          <linearGradient id="win" x1="0" x2="1" y1="0" y2="1">
            <stop offset="0" stopColor="#4fc4f7" />
            <stop offset="1" stopColor="#0a78d8" />
          </linearGradient>
        </defs>
        <rect x="0" y="0" width="17.500" height="17.500" rx="1.500" fill="url(#win)" />
        <rect x="18.500" y="0" width="17.500" height="17.500" rx="1.500" fill="url(#win)" />
        <rect x="0" y="18.500" width="17.500" height="17.500" rx="1.500" fill="url(#win)" />
        <rect x="18.500" y="18.500" width="17.500" height="17.500" rx="1.500" fill="url(#win)" />
      </svg>
      <div className="ml-[22px] w-[325px] h-[47px] rounded-full bg-[#f7f3ef] border-b-2 border-[#d9d2cc] shadow-[0_0_1px_rgba(0,0,0,0.3)] flex items-center pl-[15px] pr-[8px]">
        <Search size={25} strokeWidth={2} className="text-[#222]" />
        <span className="ml-[14px] text-[20px] text-[#555]">Search</span>
        <svg width="62" height="44" viewBox="0 0 62 44" className="ml-auto">
          <defs>
            <radialGradient id="sk" cx="0.5" cy="0.5" r="0.55">
              <stop offset="0" stopColor="#4ed2b0" />
              <stop offset="0.6" stopColor="#a9b7e8" />
              <stop offset="1" stopColor="#f7f3ef" />
            </radialGradient>
          </defs>
          <ellipse cx="31" cy="20" rx="31" ry="22" fill="url(#sk)" />
          <path d="M0 44l16-18 8 5 7-7 9 7 8-5 14 18z" fill="#13296b" />
          <path d="M16 26l8 5 7-7 9 7 8-5-6 12-11-6-10 6z" fill="#e98b3a" />
        </svg>
      </div>
      <TaskIcons />
      <div className="relative ml-auto w-[36px] h-[32px] mr-[12px] -mt-[3px]">
        <svg width="36" height="32" viewBox="0 0 36 32">
          <path d="M18 1L36 30a1 1 0 0 1-1 2H1a1 1 0 0 1-1-2z" fill="#f2c811" />
          <path d="M11 22a4 4 0 0 1 0-8 6 6 0 0 1 12-1 4.500 4.500 0 0 1 2 9z" fill="#3e3318" />
          <path d="M18 16l-3 5h3l-2 5 5-6h-3l2-4z" fill="#f2c811" />
        </svg>
        <span className="absolute left-[17px] -top-[10px] w-[24px] h-[24px] rounded-full bg-[#cc2a20] text-white text-[16px] flex items-center justify-center">5</span>
      </div>
      <div className="w-[160px] text-[17px] leading-[24px] text-[#222] whitespace-nowrap -mt-[4px]">
        <div>Thunderstorm w...</div>
        <div className="text-[#666]">In effect</div>
      </div>
      <ChevronUp size={24} strokeWidth={2} className="ml-[33px] text-[#222]" />
      <div className="ml-[23px] w-[44px] text-center text-[17.5px] leading-[24px] text-[#222] -mt-[3px]">
        ENG
        <br />
        US
      </div>
      <Wifi size={26} strokeWidth={2} className="ml-[22px] text-[#222]" />
      <svg width="24" height="24" viewBox="0 0 24 24" fill="none" stroke="#222" strokeWidth="1.5" className="ml-[3px]">
        <path d="M2 9v6h4l6 5V4L6 9z" strokeLinejoin="round" />
        <path d="M15 9c1 2 1 4 0 6" />
        <path d="M18 6c2 4 2 8 0 12" stroke="#aaa" />
      </svg>
      <svg width="26" height="20" viewBox="0 0 26 20" className="ml-[19px]">
        <rect x="1" y="3" width="21" height="15" rx="2" fill="#222" />
        <rect x="22" y="7" width="3" height="7" fill="#222" />
        <path d="M6 0L2 9h3l-2 7" stroke="#e9e4df" strokeWidth="1.500" fill="#222" />
      </svg>
      <div className="w-[117px] mr-[29px] text-right text-[17.5px] leading-[24px] text-[#222] -mt-[4px]">
        4:05 PM
        <br />
        27/09/2025
      </div>
    </div>
  );
}

export default function App() {
  return (
    <div className="w-[2240px] h-[1400px] flex flex-col overflow-hidden bg-white">
      <TitleBar />
      <div className="flex-1 min-h-0 flex">
        <ActivityBar />
        <div className="flex-1 min-w-0 flex flex-col rounded-tl-[8px] overflow-hidden">
          <ChromeBars />
          <div className="flex-1 min-h-0 flex bg-white overflow-hidden">
            <div className="w-[1758px] ml-[206px] pt-[27px] shrink-0">
              <Header />
              <div className="flex">
                <Problem />
                <Sidebar />
              </div>
            </div>
            <div className="ml-auto w-[12px] mr-[1px] shrink-0 flex flex-col items-center pt-[9px]">
              <div className="w-0 h-0 border-x-[4px] border-x-transparent border-b-[6px] border-b-[#777]" />
              <div className="mt-[10px] w-[8px] h-[545px] rounded-full bg-[#8b8b8b]" />
            </div>
          </div>
        </div>
      </div>
      <Taskbar />
    </div>
  );
}
